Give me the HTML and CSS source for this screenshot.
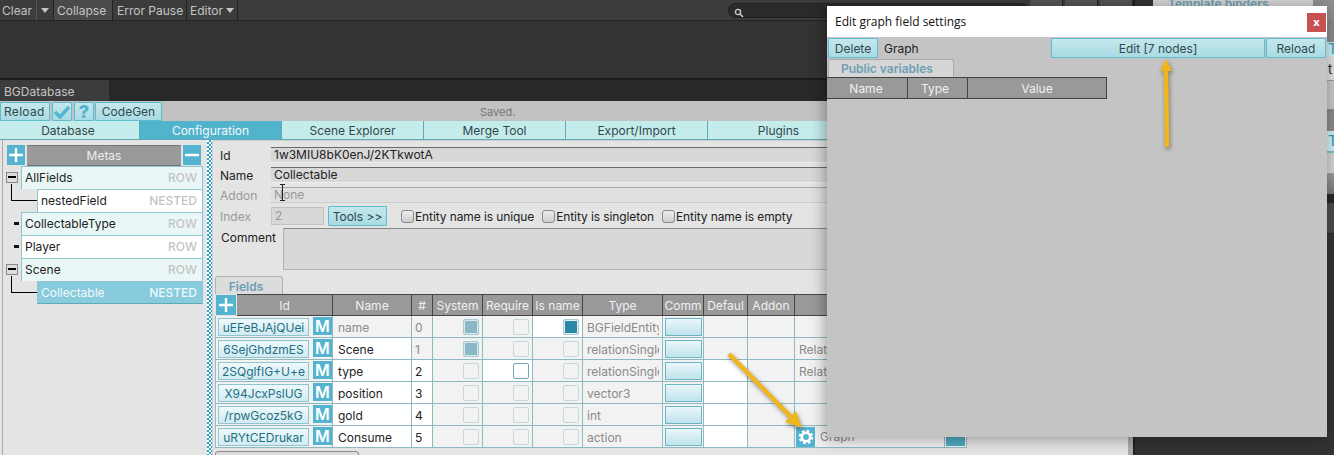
FILE: index.html

```html
<!DOCTYPE html>
<html lang="en">
<head>
  <meta charset="UTF-8">
  <title>BGDatabase</title>
  <link rel="stylesheet" href="styles.css">
</head>
<body>
<div class="page">
  <div class="editor">
    <div class="console-bar">
      <span class="con-btn con-clear">Clear</span>
      <span class="con-btn con-drop"><i class="tri"></i></span>
      <span class="con-btn con-on">Collapse</span>
      <span class="con-btn con-error">Error Pause</span>
      <span class="con-btn con-editor">Editor <i class="tri"></i></span>
      <div class="con-search">
        <svg width="10" height="10" viewBox="0 0 10 10"><circle cx="4" cy="4" r="2.6" fill="none" stroke="#ccc" stroke-width="1.4"/><path d="M6 6l3 3" stroke="#ccc" stroke-width="1.6"/></svg>
      </div>
      <span class="con-icon"></span>
      <span class="con-icon"></span>
      <span class="con-icon"></span>
    </div>
    <div class="console-body"></div>
    <div class="tab-strip"><span class="tab-title">BGDatabase</span></div>

    <div class="db">
      <div class="db-toolbar">
        <span class="btn tb-reload">Reload</span>
        <span class="btn tb-icon">
          <svg width="16" height="14" viewBox="0 0 16 14"><path d="M1 7l5 5 9-10" fill="none" stroke="#54b4cf" stroke-width="3.4"/></svg>
        </span>
        <span class="btn tb-icon tb-help">?</span>
        <span class="btn tb-codegen">CodeGen</span>
        <span class="saved">Saved.</span>
      </div>
      <div class="db-tabs">
        <span class="db-tab db-tab-first">Database</span>
        <span class="db-tab active">Configuration</span>
        <span class="db-tab">Scene Explorer</span>
        <span class="db-tab">Merge Tool</span>
        <span class="db-tab">Export/Import</span>
        <span class="db-tab">Plugins</span>
      </div>

      <div class="db-body">
        <aside class="sidebar">
          <div class="metas-head">
            <span class="icon-btn"><svg width="14" height="14" viewBox="0 0 14 14"><path d="M7 0v14M0 7h14" stroke="#fff" stroke-width="2.4"/></svg></span>
            <span class="metas-title">Metas</span>
            <span class="icon-btn"><svg width="14" height="14" viewBox="0 0 14 14"><path d="M0 7h14" stroke="#fff" stroke-width="2.4"/></svg></span>
          </div>
          <div class="tree-row">
            <span class="gutter"><i class="expander"></i></span>
            <div class="meta tint"><span>AllFields</span><b>ROW</b></div>
          </div>
          <div class="tree-row">
            <span class="gutter gutter-deep"><i class="elbow"></i></span>
            <div class="meta"><span>nestedField</span><b>NESTED</b></div>
          </div>
          <div class="tree-row">
            <span class="gutter"><i class="leaf"></i></span>
            <div class="meta tint"><span>CollectableType</span><b>ROW</b></div>
          </div>
          <div class="tree-row">
            <span class="gutter"><i class="leaf"></i></span>
            <div class="meta"><span>Player</span><b>ROW</b></div>
          </div>
          <div class="tree-row">
            <span class="gutter"><i class="expander"></i></span>
            <div class="meta tint"><span>Scene</span><b>ROW</b></div>
          </div>
          <div class="tree-row">
            <span class="gutter gutter-deep"><i class="elbow"></i></span>
            <div class="meta selected"><span>Collectable</span><b>NESTED</b></div>
          </div>
        </aside>

        <div class="splitter"></div>

        <main class="detail">
          <div class="form-row"><label>Id</label><div class="field">1w3MIU8bK0enJ/2KTkwotA</div></div>
          <div class="form-row"><label>Name</label><div class="field">Collectable</div></div>
          <div class="form-row dim"><label>Addon</label><div class="field field-off">None</div></div>
          <div class="form-row form-row-index">
            <label class="dim">Index</label>
            <div class="field field-off field-index">2</div>
            <span class="btn btn-tools">Tools &gt;&gt;</span>
            <span class="check-label"><i class="check-box"></i>Entity name is unique</span>
            <span class="check-label"><i class="check-box"></i>Entity is singleton</span>
            <span class="check-label"><i class="check-box"></i>Entity name is empty</span>
          </div>
          <div class="form-row form-row-comment">
            <label class="label-comment">Comment</label>
            <div class="comment-box"></div>
          </div>

          <div class="fields-tab">Fields</div>
          <table class="fields">
            <colgroup>
              <col class="c-add"><col class="c-id"><col class="c-name"><col class="c-num"><col class="c-flag"><col class="c-flag"><col class="c-flag">
              <col class="c-type"><col class="c-comm"><col class="c-def"><col class="c-addon"><col class="c-extra"><col class="c-end">
            </colgroup>
            <thead>
              <tr>
                <th class="th-add"><span class="icon-btn icon-btn-wide"><svg width="14" height="14" viewBox="0 0 14 14"><path d="M7 0v14M0 7h14" stroke="#fff" stroke-width="2.4"/></svg></span></th>
                <th>Id</th><th>Name</th><th>#</th><th>System</th><th>Require</th><th>Is name</th><th>Type</th><th>Comm</th><th>Defaul</th><th>Addon</th><th colspan="2"></th>
              </tr>
            </thead>
            <tbody>
              <tr>
                <td colspan="2"><div class="id-cell"><span class="id-btn">uEFeBJAjQUei</span><span class="m-btn">M</span></div></td>
                <td class="muted">name</td><td class="muted">0</td>
                <td class="flag"><i class="tick on"></i></td><td class="flag"><i class="tick"></i></td><td class="flag white"><i class="tick strong"></i></td>
                <td class="muted"><div class="clip">BGFieldEntity</div></td><td class="comm"><i class="comm-btn"></i></td><td></td><td></td><td colspan="2"></td>
              </tr>
              <tr>
                <td colspan="2"><div class="id-cell"><span class="id-btn">6SejGhdzmES</span><span class="m-btn">M</span></div></td>
                <td class="white">Scene</td><td class="muted">1</td>
                <td class="flag"><i class="tick on"></i></td><td class="flag"><i class="tick"></i></td><td class="flag"><i class="tick"></i></td>
                <td class="muted"><div class="clip">relationSingle</div></td><td class="comm"><i class="comm-btn"></i></td><td></td><td></td><td class="muted" colspan="2">Relation</td>
              </tr>
              <tr>
                <td colspan="2"><div class="id-cell"><span class="id-btn">2SQglfIG+U+e</span><span class="m-btn">M</span></div></td>
                <td class="white">type</td><td class="white">2</td>
                <td class="flag"><i class="tick"></i></td><td class="flag white"><i class="tick live"></i></td><td class="flag"><i class="tick"></i></td>
                <td class="muted"><div class="clip">relationSingle</div></td><td class="comm"><i class="comm-btn"></i></td><td class="white"></td><td></td><td class="muted" colspan="2">Relation</td>
              </tr>
              <tr>
                <td colspan="2"><div class="id-cell"><span class="id-btn">X94JcxPslUG</span><span class="m-btn">M</span></div></td>
                <td class="white">position</td><td class="white">3</td>
                <td class="flag"><i class="tick"></i></td><td class="flag"><i class="tick"></i></td><td class="flag"><i class="tick"></i></td>
                <td class="muted">vector3</td><td class="comm"><i class="comm-btn"></i></td><td class="white"></td><td></td><td colspan="2"></td>
              </tr>
              <tr>
                <td colspan="2"><div class="id-cell"><span class="id-btn">/rpwGcoz5kG</span><span class="m-btn">M</span></div></td>
                <td class="white">gold</td><td class="white">4</td>
                <td class="flag"><i class="tick"></i></td><td class="flag"><i class="tick"></i></td><td class="flag"><i class="tick"></i></td>
                <td class="muted">int</td><td class="comm"><i class="comm-btn"></i></td><td class="white"></td><td></td><td colspan="2"></td>
              </tr>
              <tr>
                <td colspan="2"><div class="id-cell"><span class="id-btn">uRYtCEDrukar</span><span class="m-btn">M</span></div></td>
                <td class="white">Consume</td><td class="white">5</td>
                <td class="flag"><i class="tick"></i></td><td class="flag"><i class="tick"></i></td><td class="flag"><i class="tick"></i></td>
                <td class="muted">action</td><td class="comm"><i class="comm-btn"></i></td><td class="white"></td><td></td>
                <td class="muted graph-td">
                  <div class="graph-cell">
                    <span class="gear-btn">
                      <svg width="16" height="16" viewBox="0 0 16 16"><circle cx="8" cy="8" r="4.2" fill="none" stroke="#fff" stroke-width="2.6"/><circle cx="8" cy="8" r="6.2" fill="none" stroke="#fff" stroke-width="2.2" stroke-dasharray="2.6 2.27"/></svg>
                    </span>
                    Graph
                  </div>
                </td>
                <td class="flag-end"><i class="end-box"></i></td>
              </tr>
            </tbody>
          </table>
          <div class="bottom-btn"></div>
        </main>
      </div>
    </div>
  </div>

  <aside class="inspector">
    <div class="ins-head">Template binders</div>
    <div class="ins-gray ins-gray-top"></div>
    <div class="ins-t">T</div>
    <div class="ins-value">t</div>
    <div class="ins-light"></div>
    <div class="ins-gray"></div>
    <div class="ins-t ins-t-tall">T</div>
    <div class="ins-gap"></div>
    <div class="ins-gray ins-gray-tall"></div>
    <div class="ins-dark"></div>
    <div class="ins-bar"></div>
  </aside>
</div>

<div class="dialog">
  <div class="dialog-title">
    <span>Edit graph field settings</span>
    <span class="dialog-close">x</span>
  </div>
  <div class="dialog-actions">
    <span class="btn btn-delete">Delete</span>
    <span class="dialog-kind">Graph</span>
    <span class="btn btn-edit">Edit [7 nodes]</span>
    <span class="btn btn-reload">Reload</span>
  </div>
  <div class="dialog-tab">Public variables</div>
  <div class="dialog-head">
    <span class="dh-name">Name</span>
    <span class="dh-type">Type</span>
    <span class="dh-value">Value</span>
  </div>
</div>

<svg class="arrows" width="1334" height="455" viewBox="0 0 1334 455">
  <path d="M729 354L793 419" stroke="#f0b61e" stroke-width="4.5" fill="none"/>
  <path d="M802 428L785 422L796 411Z" fill="#f0b61e"/>
  <path d="M1167 147L1166 70" stroke="#f0b61e" stroke-width="4.5" fill="none"/>
  <path d="M1166 59L1172 71L1160 71Z" fill="#f0b61e"/>
</svg>

<svg class="ibeam" width="7" height="17" viewBox="0 0 7 17"><path d="M1 .5h5M3.5.5v16M1 16.5h5" stroke="#222" fill="none"/></svg>
</body>
</html>
```

FILE: styles.css

```css
* { box-sizing: border-box; }
html, body { margin: 0; padding: 0; }
body { width: 1334px; height: 455px; overflow: hidden; background: #333; font-family: "Inter", "Liberation Sans", sans-serif; font-size: 12px; color: #222; position: relative; }
i { display: block; font-style: normal; }

.page { display: flex; height: 455px; }
.editor { width: 1135px; display: flex; flex-direction: column; background: #333; border-right: 2px solid #222; }

/* console */
.console-bar { height: 21px; display: flex; align-items: stretch; background: #3c3c3c; border-bottom: 1px solid #232323; color: #c4c4c4; width: 1133px; }
.con-btn { display: flex; align-items: center; gap: 4px; padding: 0 7px 0 2px; border-right: 1px solid #232323; white-space: nowrap; }
.con-clear { border-right: 0; padding-right: 5px; width: 36px; }
.con-drop { border-left: 1px solid #555; padding: 0 4px; width: 18px; }
.con-on { background: #4a4a4a; padding: 0 0 0 3px; width: 59px; }
.con-error { width: 74px; padding: 0 0 0 4px; }
.con-editor { width: 51px; padding: 0 0 0 3px; gap: 3px; }
.tri { width: 0; height: 0; border: 4px solid transparent; border-top: 5px solid #c4c4c4; border-bottom: 0; }
.con-search { width: 300px; height: 15px; margin: 3px 0 0 490px; padding: 2px 0 0 5px; background: #2a2a2a; border-radius: 7px; border: 1px solid #222; }
.con-icon { width: 33px; margin-left: 2px; background: #555; border-right: 1px solid #232323; }
.console-body { height: 59px; background: #333; border-bottom: 2px solid #1c1c1c; width: 1133px; }
.tab-strip { height: 21px; background: #282828; display: flex; width: 1133px; }
.tab-title { width: 109px; background: #3c3c3c; color: #c4c4c4; padding: 4px 0 0 4px; }

/* database window */
.db { flex: 1; display: flex; flex-direction: column; width: 1133px; min-height: 0; background: #c2c2c2; border-right: 5px solid #aaa; }
.db-toolbar { height: 20px; display: flex; align-items: center; padding-top: 1px; }
.btn { display: flex; align-items: center; justify-content: center; background: linear-gradient(#c3e7ec, #a9dbe3); border: 1px solid #5dbccd; color: #33474d; border-radius: 1px; }
.tb-reload { width: 50px; height: 19px; justify-content: flex-start; padding-left: 3px; letter-spacing: .3px; }
.tb-icon { width: 20px; height: 19px; margin-left: 2px; }
.tb-help { color: #54b4cf; font-weight: 800; font-size: 18px; }
.tb-codegen { width: 67px; height: 19px; margin-left: 1px; }
.saved { color: #777; font-size: 11px; margin-left: 318px; }

.db-tabs { height: 19px; display: flex; background: #c4eceb; border-bottom: 1px solid #5fa9b8; }
.db-tab { width: 142px; display: flex; align-items: center; justify-content: center; background: #c4eceb; border-left: 1px solid #5fa9b8; color: #33474d; }
.db-tab-first { width: 139px; border-left: 0; padding-right: 3px; }
.db-tab.active { background: #52b3cd; color: #f2f9fb; }

.db-body { flex: 1; display: flex; background: #e4e4e4; min-height: 0; }
.sidebar { width: 205px; margin-left: 2px; padding: 5px 6px 0 4px; border-left: 1px solid #aaa; }
.metas-head { height: 21px; display: flex; gap: 2px; }
.icon-btn { width: 18px; height: 20px; background: #54b4cf; display: flex; align-items: center; justify-content: center; flex: none; }
.icon-btn-wide { width: 20px; }
.metas-title { flex: 1; height: 21px; background: #999; color: #eee; text-align: center; line-height: 20px; border: 1px solid #777; border-width: 1px 0; }

.tree-row { display: flex; width: 197px; margin-left: -1px; }
.gutter { width: 15px; display: flex; align-items: center; flex: none; }
.gutter-deep { width: 31px; align-items: flex-start; padding-left: 5px; }
.expander { width: 12px; height: 11px; margin-top: -1px; border: 1px solid #888; background: linear-gradient(#000, #000) center/8px 2px no-repeat #ddd; }
.leaf { width: 5px; height: 3px; background: #111; margin-left: 8px; }
.elbow { width: 26px; height: 17px; margin-top: -5px; border-left: 1px solid #000; border-bottom: 1px solid #000; }
.meta { flex: 1; height: 23px; display: flex; align-items: center; justify-content: space-between; padding: 0 5px 1px 3px; background: #fff; border: 1px solid #8fc4d0; border-width: 1px 1px 0 1px; }
.meta b { font-weight: 500; color: #c4c4c4; }
.meta.tint { background: #eaf7f7; }
.meta.selected { background: #87cbdc; color: #f3fafc; border-bottom: 1px solid #5fa9b8; }
.meta.selected b { color: #eef8fa; }

.splitter { width: 5px; flex: none; background: repeating-conic-gradient(#2aa7c8 0 25%, #fff 0 50%) 0 0 / 4px 4px; }
.detail { flex: 1; min-width: 0; padding: 4px 0 0 7px; border-top: 1px solid #cfcfcf; border-left: 1px solid #cfcfcf; border-top-left-radius: 4px; overflow: hidden; }

/* form */
.form-row { display: flex; align-items: center; height: 20px; }
.form-row label { width: 51px; flex: none; }
.dim, .dim label { color: #999; }
.field { flex: 1; height: 16px; padding-left: 3px; line-height: 13px; background: #d8d8d8; border-top: 1px solid #6a6a6a; border-bottom: 1px solid #eee; }
.field-off { background: #e0e0e0; color: #999; border-top-color: #aaa; border-bottom-color: #ccc; }
.form-row-index { height: 22px; }
.field-index { flex: none; width: 53px; height: 18px; line-height: 16px; background: #d8d8d8; border: 1px solid #c2c2c2; }
.btn-tools { width: 59px; height: 20px; margin: 0 14px 0 4px; }
.check-label { display: flex; align-items: center; margin-right: 8px; white-space: nowrap; letter-spacing: -.1px; }
.check-box { width: 13px; height: 13px; margin-right: 1px; background: linear-gradient(#eee, #ccc); border: 1px solid #8a8a8a; border-radius: 3px; }
.form-row-comment { height: 44px; align-items: flex-start; padding-top: 1px; }
.form-row .label-comment { width: 63px; padding: 2px 0 0 1px; }
.comment-box { flex: 1; height: 42px; background: #d8d8d8; border: 1px solid #b2b2b2; border-top-color: #888; }

.fields-tab { width: 68px; height: 18px; margin: 5px 0 0 -5px; padding: 2px 6px 0 0; text-align: center; background: #dcdcdc; border: 1px solid #b2b2b2; border-bottom: 0; border-radius: 3px 3px 0 0; color: #6f9fb3; font-weight: 600; }

/* fields table */
.fields { width: 752px; margin-left: -5px; table-layout: fixed; border-collapse: separate; border-spacing: 0; }
.c-add { width: 22px; } .c-id { width: 96px; } .c-name { width: 79px; } .c-num { width: 21px; } .c-flag { width: 50px; }
.c-type { width: 80px; } .c-comm { width: 41px; } .c-def { width: 44px; } .c-addon { width: 47px; } .c-extra { width: 150px; } .c-end { width: 22px; }
.fields th { height: 22px; padding: 0; font-weight: 400; color: #f0f0f0; background: #999; border-top: 1px solid #444; border-bottom: 1px solid #444; border-right: 1px solid #444; }
.fields th.th-add { background: #e4e4e4; border: 0; vertical-align: middle; padding-left: 1px; }
.fields td { height: 22px; padding: 1px 0 0 4px; background: #f2f2f2; border-right: 1px solid #8fb9c1; border-bottom: 1px solid #8fb9c1; white-space: nowrap; overflow: hidden; }
.fields td:first-child { border-left: 1px solid #8fb9c1; padding: 0; }
.fields td:nth-child(2) { padding-left: 5px; }
.fields td:nth-child(3) { padding-left: 3px; }
.fields td.white { background: #fff; }
.fields td.muted { color: #8a8a8a; }
.fields td.flag { padding: 0 3px 0 0; }
.fields td.comm { padding: 0 0 0 2px; }
.clip { width: 72px; overflow: hidden; }
.id-cell { display: flex; align-items: center; padding-left: 2px; }
.id-btn { width: 91px; height: 18px; text-align: center; line-height: 17px; color: #1f6f85; background: linear-gradient(#eef9fb, #d0ebf1); border: 1px solid #8fc4d0; }
.m-btn { width: 19px; height: 18px; margin: -1px 0 0 4px; text-align: center; line-height: 18px; font-size: 16px; font-weight: 600; color: #fff; background: #54b4cf; }
.tick { width: 16px; height: 16px; margin-left: auto; border: 1px solid #c5d8dc; border-radius: 2px; background: #f2f2f2; }
.tick.on { background: #8ab8c6; outline: 1px solid #dce8eb; outline-offset: -2px; border-color: #a9cbd5; }
.tick.strong { background: #2b87a3; border-color: #a9cbd5; outline: 1px solid #e6f2f5; outline-offset: -2px; }
.tick.live { background: #fff; border-color: #6fa9b9; }
.comm-btn { width: 37px; height: 18px; background: linear-gradient(#eaf7fa, #bfe3ec); border: 1px solid #6db5c4; }
.fields td.graph-td { padding: 0 0 0 1px; }
.graph-cell { display: flex; align-items: center; gap: 5px; }
.gear-btn { width: 19px; height: 20px; display: flex; align-items: center; justify-content: center; background: #54b4cf; }
.fields td.flag-end { padding: 0 0 0 1px; }
.end-box { width: 19px; height: 18px; background: #4ea9c2; }
.bottom-btn { width: 144px; height: 20px; margin: 3px 0 0 -5px; background: #ddd; border: 1px solid #8a8a8a; border-radius: 3px 3px 0 0; }

/* inspector on the right, mostly under the dialog */
.inspector { flex: 1; padding-left: 18px; display: flex; flex-direction: column; background: #333; }
.ins-head { height: 20px; padding-left: 15px; color: #6f9fb3; font-weight: 600; line-height: 7px; background: linear-gradient(to right, #d4d4d4 0 160px, #8f8f8f 160px); overflow: hidden; }
.ins-gray-top { height: 16px; background: #a4a4a4; }
.ins-t { padding-left: 175px; background: #c8eef2; color: #3a8ea5; font-size: 15px; height: 14px; line-height: 13px; overflow: hidden; }
.ins-t-tall { height: 22px; line-height: 20px; border-bottom: 2px solid #7fb9c6; }
.ins-value { padding-left: 175px; background: #ddd; color: #222; font-size: 13px; height: 24px; line-height: 26px; }
.ins-light { height: 29px; border-top: 1px solid #999; background: #c4c4c4; }
.ins-gray { height: 22px; background: #888; }
.ins-gap { height: 20px; background: #d0d0d0; }
.ins-gray-tall { height: 21px; background: linear-gradient(#999, #777); }
.ins-dark { height: 9px; background: #262626; }
.ins-bar { height: 31px; background: #4a4a4a; border-bottom: 1px solid #222; }

/* dialog over the editor */
.dialog { position: absolute; left: 827px; top: 6px; width: 500px; height: 431px; background: #c4c4c4; box-shadow: -2px 2px 14px rgba(0, 0, 0, .35); }
.dialog-title { height: 31px; padding: 0 1px 0 8px; display: flex; align-items: center; justify-content: space-between; background: #fff; color: #111; font-family: "Open Sans", sans-serif; font-size: 12px; }
.dialog-close { width: 19px; height: 19px; margin-top: 1px; background: #c75050; color: #fff; font-weight: 700; font-size: 11px; text-align: center; line-height: 17px; }
.dialog-actions { height: 22px; display: flex; align-items: center; padding: 0 1px; }
.btn-delete { width: 50px; height: 20px; }
.dialog-kind { margin-left: 6px; width: 167px; }
.btn-edit { width: 214px; height: 20px; }
.btn-reload { width: 60px; height: 20px; margin-left: 1px; }
.dialog-tab { width: 126px; height: 18px; margin-left: 1px; padding: 1px 0 0 12px; background: #d6d6d6; border: 1px solid #aaa; border-bottom: 0; border-radius: 3px 3px 0 0; color: #6f9fb3; font-weight: 600; }
.dialog-head { width: 280px; height: 22px; display: flex; background: #999; color: #f0f0f0; line-height: 22px; text-align: center; border-top: 1px solid #444; border-bottom: 1px solid #444; }
.dh-name { width: 81px; border-right: 1px solid #444; padding-right: 2px; }
.dh-type { width: 60px; border-right: 1px solid #444; padding-right: 5px; }
.dh-value { width: 139px; border-right: 1px solid #444; }

/* annotations */
.arrows { position: absolute; left: 0; top: 0; filter: drop-shadow(1px 2px 2px rgba(0, 0, 0, .4)); }
.ibeam { position: absolute; left: 279px; top: 184px; }
```
